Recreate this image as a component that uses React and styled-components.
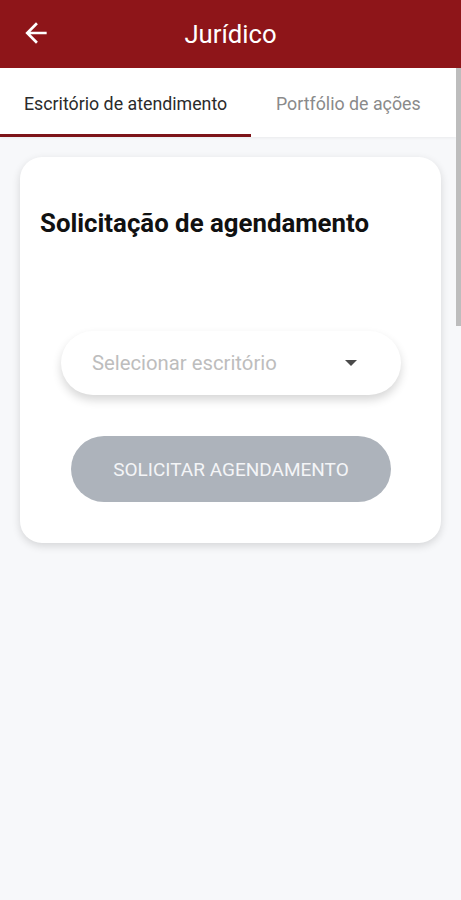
import React from "react";
import styled, { createGlobalStyle } from "styled-components";

const Global = createGlobalStyle`
  html, body { margin: 0; padding: 0; background: #f7f8fa; }
  body { font-family: Roboto, "Noto Sans", "Liberation Sans", sans-serif; }
  * { box-sizing: border-box; }
`;

const Screen = styled.div`
  position: relative;
  width: 461px;
  min-height: 900px;
  background: #f7f8fa;
  overflow: hidden;
`;

const Header = styled.header`
  height: 68px;
  background: #8e1519;
  display: flex;
  align-items: center;
  position: relative;
`;

const BackButton = styled.button`
  position: absolute;
  left: 20px;
  top: 17px;
  width: 32px;
  height: 32px;
  padding: 0;
  border: 0;
  background: transparent;
  display: flex;
  align-items: center;
  justify-content: center;
`;

const Title = styled.h1`
  flex: 1;
  margin: 0;
  text-align: center;
  color: #ffffff;
  font-size: 25.7px;
  font-weight: 400;
`;

const Tabs = styled.nav`
  height: 69px;
  background: #ffffff;
  display: flex;
  box-shadow: 0 1px 3px rgba(0, 0, 0, 0.06);
  width: 456px;
`;

const Tab = styled.div`
  padding: 4px 0 0 ${(p) => (p.$first ? 24 : 25)}px;
  display: flex;
  align-items: center;
  font-size: 17.8px;
  color: ${(p) => (p.$active ? "#2b2b2b" : "#8a8a8a")};
  border-bottom: 3px solid ${(p) => (p.$active ? "#7d1418" : "transparent")};
  white-space: nowrap;
  ${(p) => (p.$first ? "width: 251px; flex-shrink: 0;" : "")}
`;

const Thumb = styled.div`
  position: absolute;
  right: 0;
  top: 68px;
  width: 5px;
  height: 258px;
  background: #bdbdbd;
`;

const Content = styled.main`
  padding: 20px 20px 0 20px;
`;

const Card = styled.section`
  width: 421px;
  height: 386px;
  background: #ffffff;
  border-radius: 22px;
  box-shadow: 0 3px 8px rgba(0, 0, 0, 0.14);
  padding: 50px 40px 0 20px;
  display: flex;
  flex-direction: column;
`;

const CardTitle = styled.h2`
  margin: 0;
  font-size: 25.8px;
  font-weight: 700;
  color: #111111;
  line-height: 32px;
`;

const Select = styled.div`
  margin: 92px 0 0 21px;
  height: 64px;
  border-radius: 32px;
  background: #ffffff;
  box-shadow: 0 5px 10px rgba(0, 0, 0, 0.16);
  display: flex;
  align-items: center;
  justify-content: space-between;
  padding: 0 44px 0 31px;
`;

const Placeholder = styled.span`
  font-size: 20.3px;
  color: #bdbdbd;
`;

const Caret = styled.span`
  width: 0;
  height: 0;
  border-left: 6px solid transparent;
  border-right: 6px solid transparent;
  border-top: 6px solid #4a4a4a;
`;

const SubmitButton = styled.button`
  margin: 41px 10px 0 31px;
  height: 66px;
  border: 0;
  border-radius: 33px;
  background: #adb3bb;
  color: #f4f5f7;
  font-family: inherit;
  font-size: 19px;
  text-transform: uppercase;
`;

export default function App() {
  return (
    <Screen>
      <Global />
      <Header>
        <BackButton aria-label="Voltar">
          <svg width="32" height="32" viewBox="0 0 24 24">
            <path
              d="M20 11H7.83l5.59-5.59L12 4l-8 8 8 8 1.41-1.41L7.83 13H20v-2z"
              fill="#ffffff"
            />
          </svg>
        </BackButton>
        <Title>Jurídico</Title>
      </Header>
      <Tabs>
        <Tab $active $first>Escritório de atendimento</Tab>
        <Tab>Portfólio de ações</Tab>
      </Tabs>
      <Thumb />
      <Content>
        <Card>
          <CardTitle>Solicitação de agendamento</CardTitle>
          <Select>
            <Placeholder>Selecionar escritório</Placeholder>
            <Caret />
          </Select>
          <SubmitButton>Solicitar agendamento</SubmitButton>
        </Card>
      </Content>
    </Screen>
  );
}
